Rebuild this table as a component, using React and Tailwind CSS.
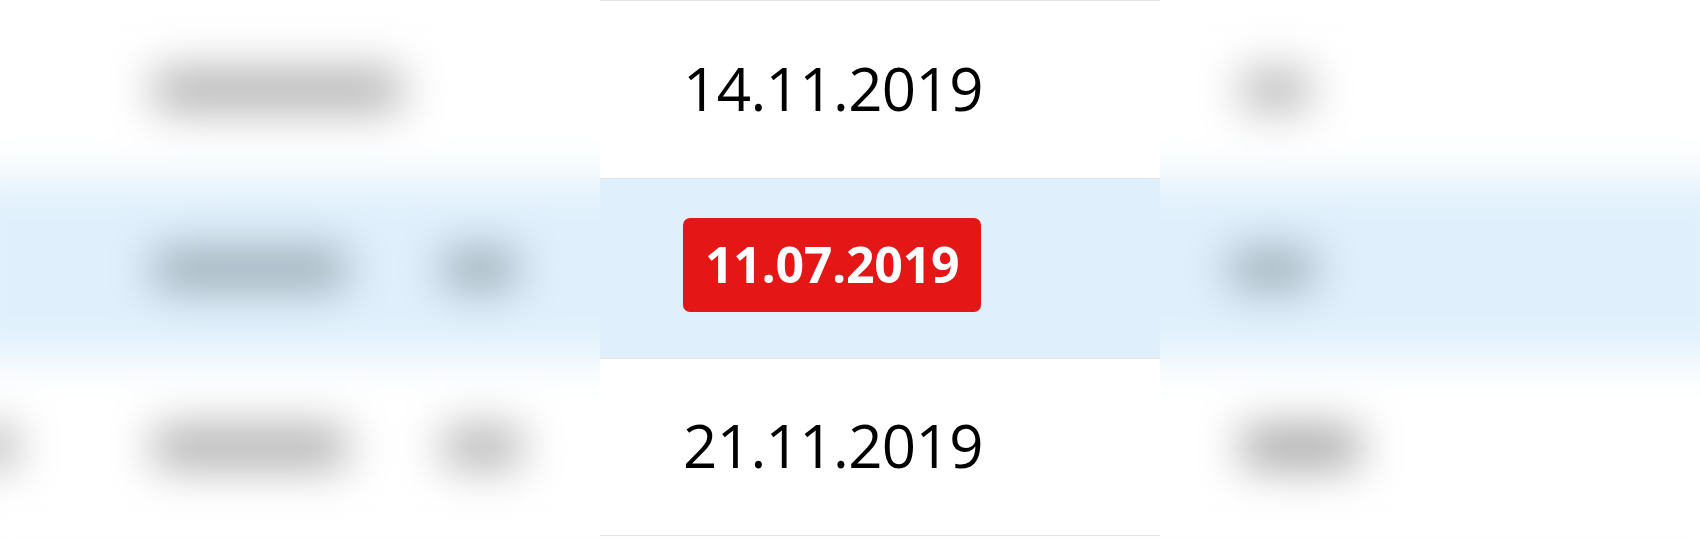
const rows = [
  { date: '14.11.2019', h: 'h-[178px]', active: false },
  { date: '11.07.2019', h: 'h-[180px]', active: true },
  { date: '21.11.2019', h: 'h-[177px]', active: false },
];

const Bar = ({ className }) => <div className={`h-[44px] rounded-full ${className}`}></div>;

const BlurredTable = () => (
  <div className="col-start-1 row-start-1 -mx-10 flex flex-col border-t border-[#e4e4e4] blur-[22px]">
    {/* row 1 */}
    <div className="flex h-[178px] shrink-0 items-center border-b border-[#e4e4e4] bg-white">
      <div className="flex w-[640px] items-center pl-[190px]">
        <Bar className="w-[255px] bg-[#b4b4b4]" />
      </div>
      <div className="w-[560px]"></div>
      <div className="flex flex-1 items-center pl-[78px]">
        <Bar className="w-[75px] bg-[#bbbbbb]" />
      </div>
    </div>
    {/* row 2 */}
    <div className="flex h-[180px] shrink-0 items-center border-b border-[#e4e4e4] bg-[#dff0fc]">
      <div className="flex w-[640px] items-center pl-[190px]">
        <Bar className="w-[200px] bg-[#9fafba]" />
        <Bar className="ml-[90px] w-[80px] bg-[#9fafba]" />
      </div>
      <div className="w-[560px]"></div>
      <div className="flex flex-1 items-center pl-[66px]">
        <Bar className="w-[92px] bg-[#a2b1bc]" />
      </div>
    </div>
    {/* row 3 */}
    <div className="flex h-[177px] shrink-0 items-center border-b border-[#e4e4e4] bg-white">
      <div className="flex w-[640px] items-center">
        <Bar className="ml-[5px] w-[55px] bg-[#b8b8b8]" />
        <Bar className="ml-[130px] w-[200px] bg-[#b2b2b2]" />
        <Bar className="ml-[90px] w-[85px] bg-[#b6b6b6]" />
      </div>
      <div className="w-[560px]"></div>
      <div className="flex flex-1 items-center pl-[78px]">
        <Bar className="w-[125px] bg-[#aaaaaa]" />
      </div>
    </div>
    <div className="flex-1 bg-white"></div>
  </div>
);

const DateColumn = () => (
  <div className="relative col-start-1 row-start-1 grid grid-cols-[600px_560px_1fr]">
    <div></div>
    <div className="flex flex-col border-t border-[#e4e4e4]">
      {rows.map((row) => (
        <div
          key={row.date}
          className={`flex ${row.h} shrink-0 items-center border-b border-[#e4e4e4] pl-[83px] ${
            row.active ? 'bg-[#dff0fc]' : 'bg-white'
          }`}
        >
          {row.active ? (
            <span className="mb-[8px] flex h-[94px] items-center rounded-[7px] bg-[#e41616] px-[22px] text-[50px] font-bold tracking-[-0.3px] text-white">
              {row.date}
            </span>
          ) : (
            <span className="mb-[4px] text-[60px] leading-none tracking-[-0.6px] text-black">{row.date}</span>
          )}
        </div>
      ))}
    </div>
    <div></div>
  </div>
);

const App = () => {
  return (
    <div
      className="grid h-[538px] w-full overflow-hidden bg-white"
      style={{ fontFamily: '"Open Sans", "Noto Sans", sans-serif' }}
    >
      <BlurredTable />
      <DateColumn />
    </div>
  );
};

export default App;
